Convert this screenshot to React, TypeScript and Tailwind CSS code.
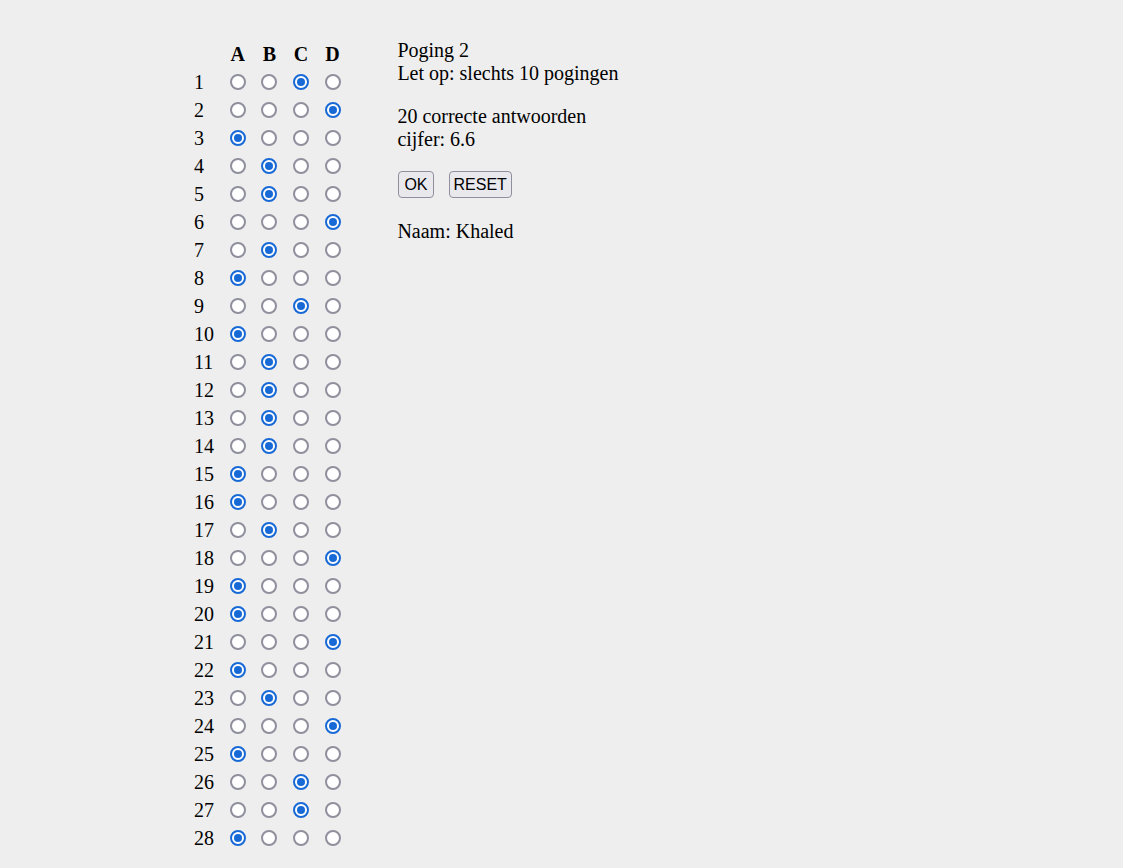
const answers = "CDABBDBACABBBBAABDAADABDACCA";

function Radio({ checked }: { checked: boolean }) {
  return checked ? (
    <span className="flex h-4 w-4 items-center justify-center rounded-full border-2 border-[#1769d6] bg-white">
      <span className="h-2 w-2 rounded-full bg-[#1769d6]" />
    </span>
  ) : (
    <span className="block h-4 w-4 rounded-full border-2 border-[#8f8f9d] bg-white" />
  );
}

export default function App() {
  return (
    <div className="min-h-[868px] bg-[#eeeeee] pl-[194px] pt-[40px] font-['Liberation_Serif',serif] text-[20px] text-black">
      <div className="flex items-start gap-[49px]">
        <div className="flex flex-col">
          <div className="flex h-[28px] items-center">
            <span className="w-[28px]" />
            {["A", "B", "C", "D"].map((l) => (
              <span key={l} className="w-[31.6px] text-center font-bold">
                {l}
              </span>
            ))}
          </div>
          {answers.split("").map((a, i) => (
            <div key={i} className="flex h-[28px] items-center">
              <span className="w-[28px]">{i + 1}</span>
              {["A", "B", "C", "D"].map((l) => (
                <span key={l} className="flex w-[31.6px] justify-center">
                  <Radio checked={a === l} />
                </span>
              ))}
            </div>
          ))}
        </div>
        <div className="-mt-[1px] flex flex-col leading-[23px]">
          <p>Poging 2</p>
          <p>Let op: slechts 10 pogingen</p>
          <p className="mt-[20px]">20 correcte antwoorden</p>
          <p>cijfer: 6.6</p>
          <div className="ml-[1px] mt-[20px] flex gap-[15px]">
            <button className="h-[27px] rounded-[4px] border border-[#8f8f9d] bg-[#e9e9ed] px-[5px] font-['Liberation_Sans',sans-serif] text-[16px] leading-none">
              OK
            </button>
            <button className="h-[27px] rounded-[4px] border border-[#8f8f9d] bg-[#e9e9ed] px-[4px] font-['Liberation_Sans',sans-serif] text-[16px] leading-none">
              RESET
            </button>
          </div>
          <p className="mt-[22px]">Naam: Khaled</p>
        </div>
      </div>
    </div>
  );
}
